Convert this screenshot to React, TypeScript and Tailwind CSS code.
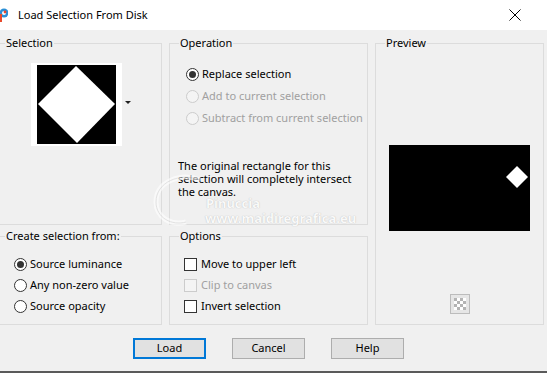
import React from 'react';

const font = "font-['Segoe_UI','Noto_Sans',sans-serif]";

function GroupBox({ label, className, children }: { label: string; className?: string; children?: React.ReactNode }) {
  return (
    <div className={`relative border border-[#dcdcdc] ${className ?? ''}`}>
      <span className="absolute left-[9px] top-[-9px] whitespace-nowrap bg-[#f0f0f0] px-px text-[11px] leading-[16px] text-black">{label}</span>
      {children}
    </div>
  );
}

function Radio({ label, checked, disabled }: { label: string; checked?: boolean; disabled?: boolean }) {
  return (
    <div className="flex h-[21px] items-center gap-[3px] whitespace-nowrap">
      <span
        className={`flex h-[13px] w-[13px] items-center justify-center rounded-full border ${
          disabled ? 'border-[#cccccc] bg-[#f4f4f4]' : 'border-[#333333] bg-white'
        }`}
      >
        {checked && <span className="h-[7px] w-[7px] rounded-full bg-[#333333]" />}
      </span>
      <span className={`text-[11px] ${disabled ? 'text-[#a0a0a0]' : 'text-black'}`}>{label}</span>
    </div>
  );
}

function Check({ label, disabled }: { label: string; disabled?: boolean }) {
  return (
    <div className="flex h-[21px] items-center gap-[4px] whitespace-nowrap">
      <span className={`h-[13px] w-[13px] border ${disabled ? 'border-[#cccccc] bg-[#f4f4f4]' : 'border-[#333333] bg-white'}`} />
      <span className={`text-[11px] ${disabled ? 'text-[#a0a0a0]' : 'text-black'}`}>{label}</span>
    </div>
  );
}

function Btn({ label, primary }: { label: string; primary?: boolean }) {
  return (
    <button
      className={`h-[21px] w-[73px] bg-[#e1e1e1] text-[11px] text-black ${
        primary ? 'border-2 border-[#0078d7]' : 'border border-[#adadad]'
      }`}
    >
      {label}
    </button>
  );
}

export default function App() {
  return (
    <div className={`relative h-[373px] w-[547px] overflow-hidden bg-[#f0f0f0] ${font}`}>
      {/* title bar */}
      <div className="flex h-[30px] items-center bg-white">
        <svg width="10" height="16" viewBox="0 0 10 16" className="ml-[-2px]">
          <circle cx="6" cy="6" r="4.5" fill="#2b8fd6" />
          <circle cx="6" cy="6" r="2" fill="#ffffff" />
          <rect x="1" y="7" width="3" height="8" fill="#e84a2c" />
          <circle cx="7" cy="5" r="1.4" fill="#e84a2c" />
        </svg>
        <span className="ml-[10px] text-[11px] text-black">Load Selection From Disk</span>
        <svg width="12" height="12" viewBox="0 0 12 12" className="ml-auto mr-[26px]">
          <path d="M0.5 0.5 L11.5 11.5 M11.5 0.5 L0.5 11.5" stroke="#000" strokeWidth="1" />
        </svg>
      </div>

      {/* groups */}
      <div className="ml-[-5px] mt-[13px] grid grid-cols-[167px_199px_169px] grid-rows-[182px_89px] gap-x-[7px] gap-y-[11px]">
        <GroupBox label="Selection">
          <div className="ml-[35px] mt-[19px] flex items-center">
            <div className="bg-white px-[6px] py-[2px]">
              <div className="h-[79px] w-[79px] bg-black">
                <svg width="79" height="79" viewBox="0 0 79 79">
                  <polygon points="39,1 78,39 40,78 1,39" fill="#fff" />
                </svg>
              </div>
            </div>
            <svg width="6" height="4" viewBox="0 0 6 4" className="ml-[3px] mt-[-4px]">
              <polygon points="0,0 6,0 3,3" fill="#222" />
            </svg>
          </div>
        </GroupBox>

        <GroupBox label="Operation">
          <div className="ml-[16px] mt-[20px] flex flex-col gap-px">
            <Radio label="Replace selection" checked />
            <Radio label="Add to current selection" disabled />
            <Radio label="Subtract from current selection" disabled />
          </div>
          <p className="ml-[8px] mt-[30px] whitespace-nowrap text-[11px] leading-[13px] text-black">
            The original rectangle for this
            <br />
            selection will completely intersect
            <br />
            the canvas.
          </p>
        </GroupBox>

        <GroupBox label="Preview" className="row-span-2 flex flex-col items-center">
          <div className="mt-[101px] h-[86px] w-[141px] bg-black py-[21px] pl-[117px]">
            <svg width="22" height="22" viewBox="0 0 22 22">
              <polygon points="11,0 22,11 11,22 0,11" fill="#fff" />
            </svg>
          </div>
          <div className="mt-[63px] h-[20px] w-[20px] border border-[#bcbcbc] bg-[#e6e6e6] p-[3px]">
            <svg width="12" height="12" viewBox="0 0 12 12">
              <rect width="12" height="12" fill="#fff" />
              <rect x="0" y="0" width="3" height="3" fill="#b4b4b4" />
              <rect x="6" y="0" width="3" height="3" fill="#b4b4b4" />
              <rect x="3" y="3" width="3" height="3" fill="#b4b4b4" />
              <rect x="9" y="3" width="3" height="3" fill="#b4b4b4" />
              <rect x="0" y="6" width="3" height="3" fill="#b4b4b4" />
              <rect x="6" y="6" width="3" height="3" fill="#b4b4b4" />
              <rect x="3" y="9" width="3" height="3" fill="#b4b4b4" />
              <rect x="9" y="9" width="3" height="3" fill="#b4b4b4" />
            </svg>
          </div>
        </GroupBox>

        <GroupBox label="Create selection from:">
          <div className="ml-[18px] mt-[17px] flex flex-col">
            <Radio label="Source luminance" checked />
            <Radio label="Any non-zero value" />
            <Radio label="Source opacity" />
          </div>
        </GroupBox>

        <GroupBox label="Options">
          <div className="ml-[14px] mt-[17px] flex flex-col">
            <Check label="Move to upper left" />
            <Check label="Clip to canvas" disabled />
            <Check label="Invert selection" />
          </div>
        </GroupBox>
      </div>

      {/* buttons */}
      <div className="mt-[13px] flex gap-[26px] pl-[133px]">
        <Btn label="Load" primary />
        <Btn label="Cancel" />
        <Btn label="Help" />
      </div>

      {/* watermark */}
      <div className="pointer-events-none absolute left-[150px] top-[172px] flex items-end opacity-60">
        <svg width="56" height="56" viewBox="0 0 56 56">
          <path d="M50 8 C30 0 6 10 6 30 C6 46 22 54 36 50" stroke="#ffffff" strokeWidth="5" fill="none" />
          <path d="M50 8 C30 0 6 10 6 30 C6 46 22 54 36 50" stroke="#d8d8d8" strokeWidth="1" fill="none" />
        </svg>
        <div className="mb-[2px] ml-[-1px] flex flex-col font-bold leading-[15px] text-white [text-shadow:0_0_1px_#8a8a8a]">
          <span className="ml-[1px] text-[13px]">Pinuccia</span>
          <span className="text-[13px]">www.maidiregrafica.eu</span>
        </div>
      </div>

      <div className="absolute bottom-0 left-0 h-[2px] w-full bg-[#5a5a5a]" />
    </div>
  );
}
